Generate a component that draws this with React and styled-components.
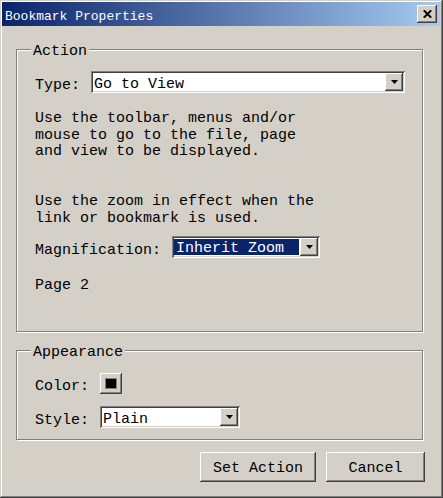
import React from 'react'
import styled, { createGlobalStyle } from 'styled-components'

const GlobalStyle = createGlobalStyle`
    html, body {
        margin: 0;
        padding: 0;
        background: #d4d0c8;
    }
    body {
        font-family: "Liberation Mono", "DejaVu Sans Mono", monospace;
        font-size: 15px;
        color: #000;
    }
    * {
        box-sizing: border-box;
    }
`;

const raised = `
    background: #d4d0c8;
    box-shadow: inset -1px -1px #404040, inset 1px 1px #ffffff,
        inset -2px -2px #808080, inset 2px 2px #d4d0c8;
`;

const Window = styled.div`
    width: 443px;
    height: 498px;
    padding: 2px 3px 3px 2px;
    display: flex;
    flex-direction: column;
    background: #d4d0c8;
    box-shadow: inset -1px -1px #404040, inset 1px 1px #d4d0c8,
        inset -2px -2px #808080, inset 2px 2px #ffffff;
`;

const TitleBar = styled.div`
    height: 24px;
    display: flex;
    align-items: center;
    justify-content: space-between;
    padding: 0 3px;
    background: linear-gradient(to right, #0a246a, #a6caf0);
    color: #fff;
    font-size: 13px;
`;

const Title = styled.span`
    padding-top: 4px;
`;

const CloseButton = styled.div`
    ${raised}
    width: 20px;
    height: 18px;
    display: flex;
    align-items: center;
    justify-content: center;
`;

const Body = styled.div`
    display: flex;
    flex-direction: column;
    padding: 0 17px 0 14px;
`;

const Group = styled.div`
    height: ${p => p.$height}px;
    margin-top: ${p => p.$top}px;
    display: flex;
    flex-direction: column;
    padding: 0 17px 0 18px;
    border: 1px solid #808080;
    box-shadow: inset 1px 1px #ffffff, 1px 1px #ffffff;
`;

const Legend = styled.span`
    align-self: flex-start;
    margin: -9px 0 0 -4px;
    padding: 2px 2px 0;
    line-height: 17px;
    background: #d4d0c8;
`;

const Row = styled.div`
    display: flex;
    align-items: center;
    gap: 11px;
    margin-top: ${p => p.$top}px;
`;

const Label = styled.span`
    padding-top: 7px;
    line-height: 17px;
`;

const Text = styled.div`
    margin-top: ${p => p.$top}px;
    line-height: 16.5px;
    white-space: nowrap;
    ${p => p.$clip && `height: ${p.$clip}px; overflow: hidden;`}
`;

const Combo = styled.div`
    width: ${p => p.$width}px;
    height: 22px;
    padding: 2px;
    display: flex;
    background: #fff;
    box-shadow: inset 1px 1px #808080, inset -1px -1px #ffffff,
        inset 2px 2px #404040, inset -2px -2px #d4d0c8;
`;

const Value = styled.div`
    flex: 1;
    display: flex;
    align-items: center;
    margin: ${p => (p.$selected ? '1px 1px 1px 0' : '0')};
    padding: ${p => (p.$selected ? '4px 0 0 2px' : '5px 0 0 1px')};
    line-height: ${p => (p.$selected ? '12px' : '13px')};
    background: ${p => (p.$selected ? '#0a246a' : 'transparent')};
    color: ${p => (p.$selected ? '#fff' : '#000')};
    white-space: nowrap;
`;

const DropButton = styled.div`
    ${raised}
    width: 18px;
    height: 18px;
    display: flex;
    align-items: center;
    justify-content: center;
`;

const ColorButton = styled.div`
    ${raised}
    width: 22px;
    height: 21px;
    display: flex;
    align-items: center;
    justify-content: center;
`;

const Swatch = styled.span`
    width: 12px;
    height: 11px;
    background: #000;
    border: 1px solid #808080;
`;

const Buttons = styled.div`
    display: flex;
    justify-content: flex-end;
    gap: 10px;
    margin: 12px -2px 0 0;
`;

const Button = styled.div`
    ${raised}
    width: ${p => p.$width}px;
    height: 30px;
    padding-top: 3px;
    display: flex;
    align-items: center;
    justify-content: center;
`;

function Arrow() {
    return (
        <svg width="7" height="4" viewBox="0 0 7 4">
            <polygon points="0,0 7,0 3.5,4" fill="#000" />
        </svg>
    )
}

function Select({ width, value, selected }) {
    return (
        <Combo $width={width}>
            <Value $selected={selected}>{value}</Value>
            <DropButton>
                <Arrow />
            </DropButton>
        </Combo>
    )
}

export default function App() {
    return (
        <Window>
            <GlobalStyle />
            <TitleBar>
                <Title>Bookmark Properties</Title>
                <CloseButton>
                    <svg width="9" height="8" viewBox="0 0 9 8">
                        <path d="M0.8 0.3 L8.2 7.7 M8.2 0.3 L0.8 7.7" stroke="#000" strokeWidth="2" />
                    </svg>
                </CloseButton>
            </TitleBar>
            <Body>
                <Group $top={23} $height={283}>
                    <Legend>Action</Legend>
                    <Row $top={10}>
                        <Label>Type:</Label>
                        <Select width={315} value="Go to View" />
                    </Row>
                    <Text $top={17} $clip={46}>
                        Use the toolbar, menus and/or<br />
                        mouse to go to the file, page<br />
                        and view to be displayed.
                    </Text>
                    <Text $top={37}>
                        Use the zoom in effect when the<br />
                        link or bookmark is used.
                    </Text>
                    <Row $top={8}>
                        <Label>Magnification:</Label>
                        <Select width={148} value="Inherit Zoom" selected />
                    </Row>
                    <Text $top={19}>Page 2</Text>
                </Group>
                <Group $top={18} $height={90}>
                    <Legend>Appearance</Legend>
                    <Row $top={10}>
                        <Label>Color:</Label>
                        <ColorButton>
                            <Swatch />
                        </ColorButton>
                    </Row>
                    <Row $top={10}>
                        <Label>Style:</Label>
                        <Select width={140} value="Plain" />
                    </Row>
                </Group>
                <Buttons>
                    <Button $width={116}>Set Action</Button>
                    <Button $width={99}>Cancel</Button>
                </Buttons>
            </Body>
        </Window>
    )
}
